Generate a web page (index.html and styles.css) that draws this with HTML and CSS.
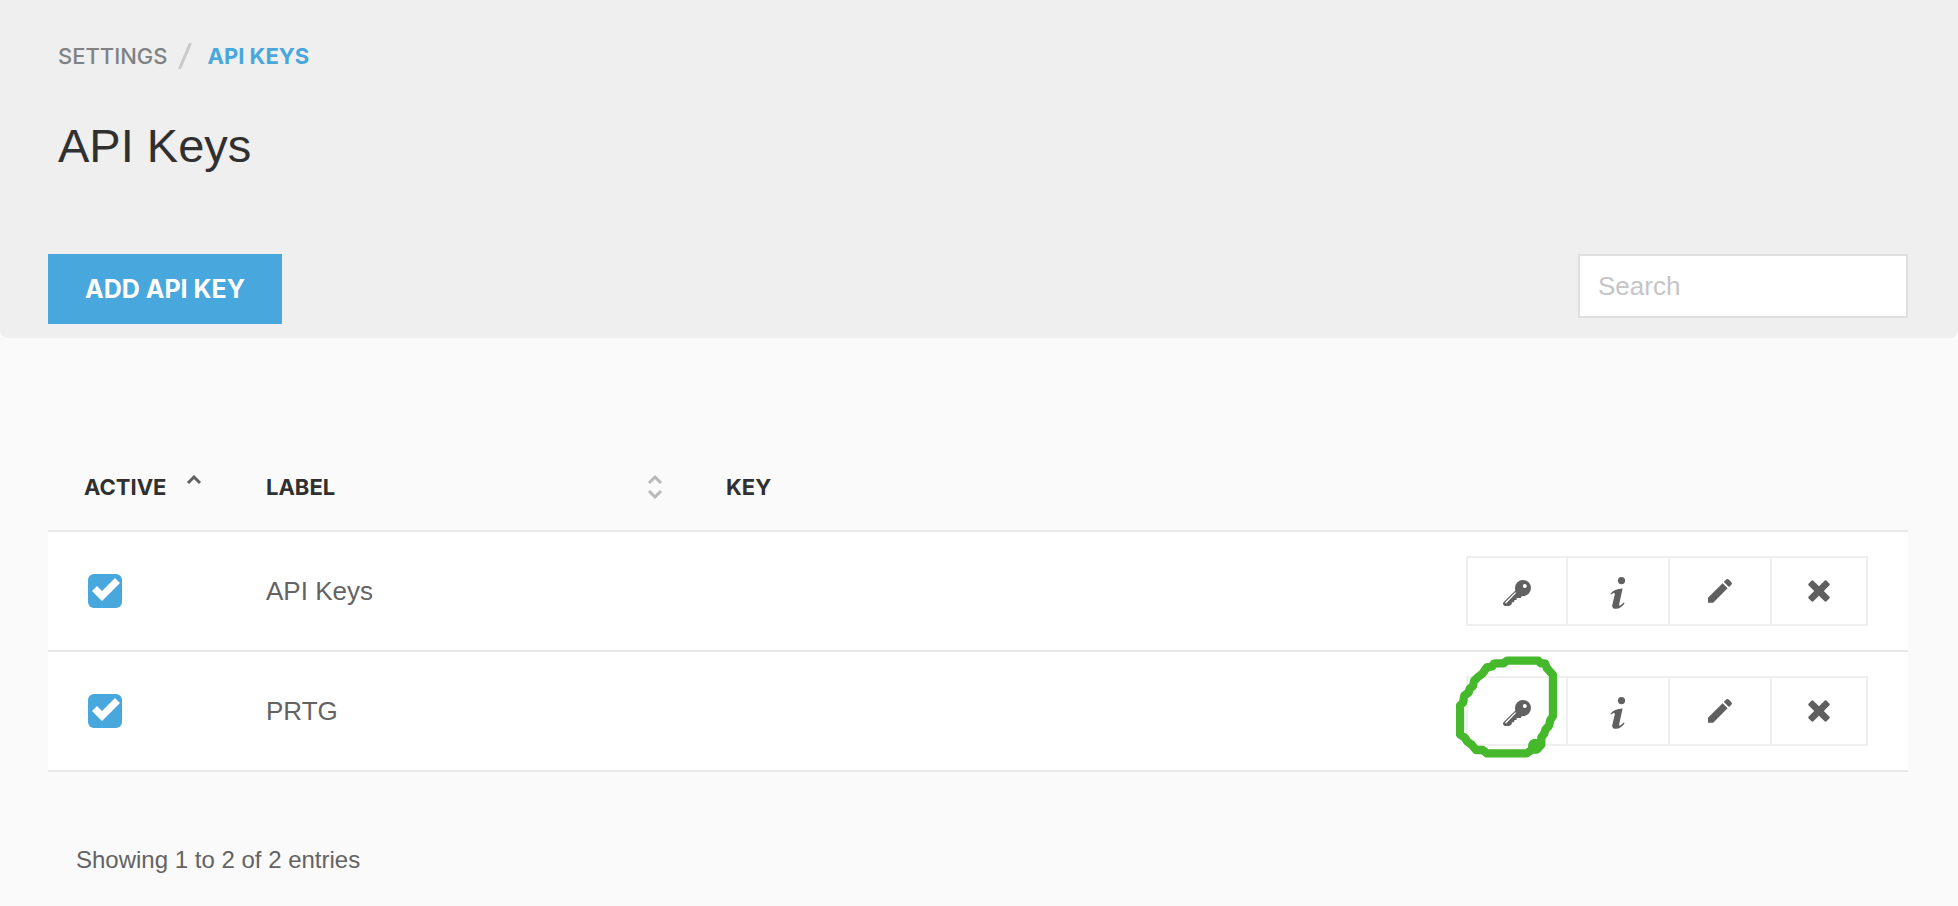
FILE: index.html
```html
<!DOCTYPE html>
<html lang="en">
<head>
<meta charset="utf-8">
<title>API Keys</title>
<link rel="stylesheet" href="styles.css">
</head>
<body>
<svg class="sprite" aria-hidden="true">
  <symbol id="icon-key" viewBox="0 -4 28 30">
    <path fill-rule="evenodd" d="M20 0a8 8 0 0 0-8 8c0 1 .1 1.800.4 2.600L.4 22.200C-.3 23.400 0 24.700 1 25.400c1 .8 5 .8 6.200 0L8.800 24V22.500l2.400-.6V20.300l2.400-.6V18h4.200l1-2.100c.4.100.8.100 1.200.1a8 8 0 0 0 0-16zm1.800 4a2 2 0 1 1 0 4 2 2 0 0 1 0-4zM12.200 12.200l.9.900L3 23.600l-1-1z"/>
  </symbol>
  <symbol id="icon-info" viewBox="0 -4 16 36">
    <circle cx="11.500" cy="3.600" r="3.600"/>
    <path d="M.4 16.800C3 13.300 7 11.500 12.600 11.400L9.200 27.200c-.3 1.600.8 1.500 2.300.3l2.100-1.900 1 .8c-2.200 3-5.200 5.400-8.800 5.400-3.200 0-4-1.800-3.400-4.600l2.300-9.200c.4-1.700-.2-2.400-1.500-1.900l-1.900 1.300z"/>
  </symbol>
  <symbol id="icon-pencil" viewBox="0 0 26 26">
    <path d="M1 19.800 15.600 5.200l5 5L6.200 24.800H1zM16.800 4l2.400-2.400a2 2 0 0 1 2.600 0l2.600 2.600a2 2 0 0 1 0 2.500L22 9.100z"/>
  </symbol>
  <symbol id="icon-remove" viewBox="0 0 22 22">
    <path d="M5.400.7 11 6.200 16.600.7a1.500 1.500 0 0 1 2 0l2.700 2.700a1.500 1.500 0 0 1 0 2L15.800 11l5.500 5.600a1.500 1.500 0 0 1 0 2l-2.700 2.700a1.500 1.500 0 0 1-2 0L11 15.800l-5.600 5.500a1.500 1.500 0 0 1-2 0L.7 18.600a1.500 1.500 0 0 1 0-2L6.200 11 .7 5.400a1.500 1.500 0 0 1 0-2L3.400.7a1.500 1.500 0 0 1 2 0z"/>
  </symbol>
</svg>

<header class="page-header">
  <nav class="breadcrumb" aria-label="Breadcrumb">
    <a href="#settings">SETTINGS</a>
    <svg class="slash" viewBox="0 0 14 26" aria-hidden="true"><path d="M1.500 26 12.500 0"/></svg>
    <a href="#api-keys" class="current" aria-current="page">API KEYS</a>
  </nav>
  <h1>API Keys</h1>
  <div class="toolbar">
    <button type="button" class="add-button">ADD API KEY</button>
    <input type="search" class="search" placeholder="Search" aria-label="Search">
  </div>
</header>

<main class="content">
  <table class="keys">
    <colgroup><col class="col-active"><col class="col-label"><col class="col-key"><col class="col-actions"></colgroup>
    <thead>
      <tr>
        <th scope="col"><span class="heading">ACTIVE <svg class="sort up" viewBox="0 0 16 24" aria-hidden="true"><path d="M2 8l6-6 6 6"/></svg></span></th>
        <th scope="col"><span class="heading spread">LABEL <svg class="sort" viewBox="0 0 16 24" aria-hidden="true"><path d="M2 8l6-6 6 6M2 16l6 6 6-6"/></svg></span></th>
        <th scope="col">KEY</th>
        <td></td>
      </tr>
    </thead>
    <tbody>
      <tr>
        <td><input type="checkbox" class="check" aria-label="API Keys active" checked></td>
        <td>API Keys</td>
        <td></td>
        <td>
          <div class="actions">
            <button type="button" aria-label="Show key"><svg class="key"><use href="#icon-key"/></svg></button>
            <button type="button" aria-label="Info"><svg class="info"><use href="#icon-info"/></svg></button>
            <button type="button" aria-label="Edit"><svg class="pencil"><use href="#icon-pencil"/></svg></button>
            <button type="button" aria-label="Delete"><svg class="remove"><use href="#icon-remove"/></svg></button>
          </div>
        </td>
      </tr>
      <tr>
        <td><input type="checkbox" class="check" aria-label="PRTG active" checked></td>
        <td>PRTG</td>
        <td></td>
        <td>
          <div class="actions">
            <button type="button" aria-label="Show key"><svg class="key"><use href="#icon-key"/></svg></button>
            <button type="button" aria-label="Info"><svg class="info"><use href="#icon-info"/></svg></button>
            <button type="button" aria-label="Edit"><svg class="pencil"><use href="#icon-pencil"/></svg></button>
            <button type="button" aria-label="Delete"><svg class="remove"><use href="#icon-remove"/></svg></button>
            <svg class="marker" viewBox="50 48 306 306" aria-hidden="true"><path d="M203 62H297L304 70H317L323 85 341 105V228L333 240 329 257 319 268 314 282 306 292V314L292 329H278L262 340H143L130 330H110L98 315 84 305 76 293 62 283V197L71 188 75 167 88 157 91 146 101 138 104 123 115 112 129 101 143 82 158 79 165 70H193Z"/><circle cx="288" cy="318" r="22"/></svg>
          </div>
        </td>
      </tr>
    </tbody>
  </table>
  <p class="summary">Showing 1 to 2 of 2 entries</p>
</main>
</body>
</html>
```
FILE: styles.css
```css
* {
  box-sizing: border-box;
}

body {
  margin: 0;
  background: #fafafa;
  color: #636363;
  font: 26px/32px "Liberation Sans", Arial, sans-serif;
}

button,
input {
  margin: 0;
  font: inherit;
}

.sprite {
  display: none;
}

.page-header {
  padding: 40px 50px 14px 48px;
  background: #efefef;
  border-radius: 0 0 8px 8px;
}

.breadcrumb {
  display: flex;
  align-items: center;
  padding-left: 10px;
  font: 500 22px/32px Inter, sans-serif;
}

.breadcrumb a {
  color: #808184;
  text-decoration: none;
}

.breadcrumb .current {
  color: #48a7dd;
  font-weight: 700;
}

.slash {
  width: 14px;
  height: 26px;
  margin: 0 16px 0 10px;
  fill: none;
  stroke: #cacaca;
  stroke-width: 3;
}

h1 {
  margin: 46px 0 80px;
  padding-left: 10px;
  color: #303030;
  font-size: 47px;
  font-weight: 400;
  line-height: 56px;
}

.toolbar {
  display: flex;
  align-items: flex-start;
  justify-content: space-between;
}

.add-button {
  min-width: 234px;
  height: 70px;
  padding: 0 36px;
  border: 0;
  background: #48a7dd;
  color: #fff;
  font: 700 25px/32px Inter, sans-serif;
}

.search {
  width: 330px;
  height: 64px;
  padding: 0 18px;
  border: 2px solid #dfdfdf;
  background: #fff;
  appearance: none;
}

.search::placeholder {
  color: #c5c5c5;
}

.content {
  padding: 108px 50px 0 48px;
}

.keys {
  width: 100%;
  table-layout: fixed;
  border-collapse: separate;
  border-spacing: 0;
}

.col-active {
  width: 182px;
}

.col-label {
  width: 460px;
}

.col-actions {
  width: 480px;
}

.keys th,
.keys td {
  padding: 0 0 0 36px;
  border-bottom: 2px solid #e8e8e8;
  text-align: left;
}

.keys th {
  height: 86px;
  padding-bottom: 2px;
  color: #303030;
  font: 700 22px/32px Inter, sans-serif;
}

.keys tbody td {
  height: 120px;
  background: #fff;
}

.heading {
  display: flex;
  align-items: center;
  gap: 20px;
}

.spread {
  justify-content: space-between;
  padding-right: 27px;
}

.sort {
  width: 16px;
  height: 24px;
  fill: none;
  stroke: #b9b9b9;
  stroke-width: 3;
}

.sort.up {
  stroke: #636363;
}

.check {
  display: block;
  width: 34px;
  height: 34px;
  margin-left: 4px;
  border-radius: 6px;
  background: #48a7dd;
  appearance: none;
}

.check:checked::before {
  content: "";
  display: block;
  width: 34px;
  height: 34px;
  background: #fff;
  clip-path: polygon(4px 17px, 9px 12px, 14px 17px, 27px 4px, 32px 9px, 14px 27px);
}

.actions {
  position: relative;
  display: grid;
  grid-template-columns: 100px 102px 102px 94px;
  width: 402px;
  height: 70px;
  margin: 0 40px 0 auto;
  border: 2px solid #efefef;
}

.actions button {
  display: flex;
  align-items: center;
  justify-content: center;
  padding: 0;
  border: 0;
  border-right: 2px solid #efefef;
  background: #fff;
  color: #606060;
}

.actions button:last-of-type {
  border-right: 0;
}

.actions button svg {
  fill: currentColor;
}

.key {
  width: 28px;
  height: 30px;
}

.info {
  width: 16px;
  height: 36px;
}

.pencil {
  width: 26px;
  height: 26px;
}

.remove {
  width: 22px;
  height: 22px;
}

.marker {
  position: absolute;
  top: -22px;
  left: -12px;
  width: 102px;
  height: 102px;
  fill: none;
  stroke: #45b82b;
  stroke-width: 25;
  stroke-linejoin: round;
}

.marker circle {
  fill: #45b82b;
  stroke: none;
}

.summary {
  margin: 72px 0 0;
  padding-left: 28px;
  font-size: 24px;
}
```
